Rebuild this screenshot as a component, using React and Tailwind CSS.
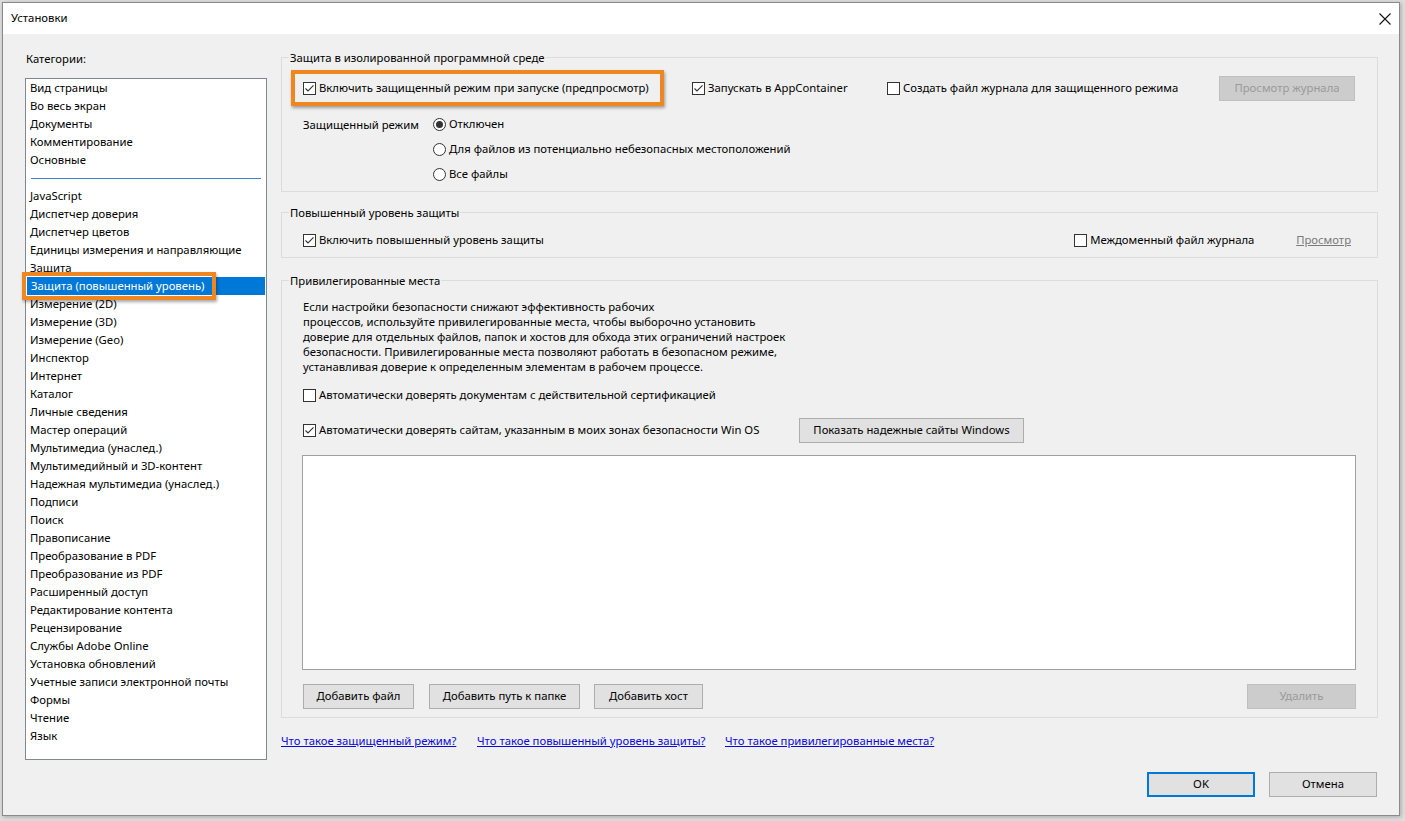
import React from "react";

const categories = [
  "Вид страницы",
  "Во весь экран",
  "Документы",
  "Комментирование",
  "Основные",
  "---",
  "JavaScript",
  "Диспетчер доверия",
  "Диспетчер цветов",
  "Единицы измерения и направляющие",
  "Защита",
  "Защита (повышенный уровень)",
  "Измерение (2D)",
  "Измерение (3D)",
  "Измерение (Geo)",
  "Инспектор",
  "Интернет",
  "Каталог",
  "Личные сведения",
  "Мастер операций",
  "Мультимедиа (унаслед.)",
  "Мультимедийный и 3D-контент",
  "Надежная мультимедиа (унаслед.)",
  "Подписи",
  "Поиск",
  "Правописание",
  "Преобразование в PDF",
  "Преобразование из PDF",
  "Расширенный доступ",
  "Редактирование контента",
  "Рецензирование",
  "Службы Adobe Online",
  "Установка обновлений",
  "Учетные записи электронной почты",
  "Формы",
  "Чтение",
  "Язык",
];

const SELECTED = "Защита (повышенный уровень)";

function Check({ checked }) {
  return (
    <span className="w-[13px] h-[13px] border border-[#333333] bg-white shrink-0 flex items-center justify-center">
      {checked && (
        <svg width="11" height="11" viewBox="0 0 11 11">
          <path d="M1.5 5.5 L4 8 L9.5 2.3" fill="none" stroke="#333333" strokeWidth="1.1" />
        </svg>
      )}
    </span>
  );
}

function CheckRow({ checked, children, className = "" }) {
  return (
    <div className={"flex items-center gap-[3px] whitespace-nowrap " + className}>
      <Check checked={checked} />
      <span>{children}</span>
    </div>
  );
}

function Radio({ on, children }) {
  return (
    <div className="h-[25px] flex items-center gap-[3px] whitespace-nowrap">
      <span className="w-[13px] h-[13px] rounded-full border border-[#333333] bg-white flex items-center justify-center shrink-0">
        {on && <span className="w-[7px] h-[7px] rounded-full bg-[#333333]" />}
      </span>
      <span>{children}</span>
    </div>
  );
}

function Btn({ children, className = "", disabled }) {
  return (
    <div
      className={
        "h-[25px] flex items-center justify-center border whitespace-nowrap " +
        (disabled
          ? "bg-[#cccccc] border-[#bfbfbf] text-[#9a9a9a] "
          : "bg-[#e1e1e1] border-[#adadad] text-black ") +
        className
      }
    >
      {children}
    </div>
  );
}

function Group({ title, className = "", children }) {
  return (
    <div className={"border border-[#dcdcdc] " + className}>
      <div className="-mt-[8px] ml-[7px] px-[1px] h-[16px] leading-[16px] bg-[#f0f0f0] w-fit">{title}</div>
      {children}
    </div>
  );
}

export default function App() {
  return (
    <div className="w-[1405px] h-[821px] bg-[#dedede] overflow-hidden text-[11.3px] text-black font-['Noto_Sans',sans-serif] pt-[2px] pl-[2px]">
      <div className="w-[1398px] h-[814px] border border-[#8a8a8a] bg-[#f0f0f0] shadow-[1px_1px_4px_rgba(0,0,0,0.25)] flex flex-col">
        {/* title bar */}
        <div className="h-[31px] bg-white flex items-center justify-between pl-[8px] pr-[7px] shrink-0">
          <span>Установки</span>
          <svg width="14" height="14" viewBox="0 0 14 14">
            <path d="M1.5 1.5 L12.5 12.5 M12.5 1.5 L1.5 12.5" stroke="#111" strokeWidth="1.1" />
          </svg>
        </div>

        {/* body */}
        <div className="flex pl-[22px]">
          {/* left column */}
          <div className="w-[242px] pt-[17px] shrink-0">
            <div className="h-[16px] leading-[16px] pl-[1px]">Категории:</div>
            <div className="relative mt-[11px] h-[682px] border border-[#828790] bg-white">
              {categories.map((c, i) =>
                c === "---" ? (
                  <div key={i} className="h-[18px] flex items-center px-[5px]">
                    <div className="h-px w-full bg-[#3c82c8]" />
                  </div>
                ) : (
                  <div
                    key={i}
                    className={
                      "h-[18px] leading-[18px] pl-[4px] whitespace-nowrap " +
                      (c === SELECTED ? "bg-[#0078d7] text-white mx-px pl-[3px]" : "")
                    }
                  >
                    {c}
                  </div>
                )
              )}
              <div className="absolute left-[-4px] top-[193px] w-[194px] h-[28px] border-[4px] border-[#f0861f] shadow-[1px_2px_3px_rgba(0,0,0,0.35)]" />
            </div>
          </div>

          {/* right column */}
          <div className="w-[1097px] ml-[14px] pt-[23px]">
            <Group title="Защита в изолированной программной среде" className="pb-[4px]">
              <div className="flex items-center mt-[4px]">
                <div className="ml-[9px] h-[36px] border-[4px] border-[#f0861f] shadow-[1px_2px_3px_rgba(0,0,0,0.35)] flex items-center pl-[8px] pr-[6px] w-[373px]">
                  <CheckRow checked>Включить защищенный режим при запуске (предпросмотр)</CheckRow>
                </div>
                <CheckRow checked className="ml-[28px] w-[195px]">Запускать в AppContainer</CheckRow>
                <CheckRow className="w-[332px]">Создать файл журнала для защищенного режима</CheckRow>
                <Btn disabled className="w-[136px]">Просмотр журнала</Btn>
              </div>
              <div className="flex mt-[6px] pl-[21px]">
                <div className="w-[130px] h-[25px] leading-[25px]">Защищенный режим</div>
                <div className="flex flex-col">
                  <Radio on>Отключен</Radio>
                  <Radio>Для файлов из потенциально небезопасных местоположений</Radio>
                  <Radio>Все файлы</Radio>
                </div>
              </div>
            </Group>

            <Group title="Повышенный уровень защиты" className="mt-[20px] pb-[6px]">
              <div className="flex items-center h-[22px] mt-[8px] pl-[21px] pr-[26px]">
                <CheckRow checked>Включить повышенный уровень защиты</CheckRow>
                <CheckRow className="ml-auto w-[222px]">Междоменный файл журнала</CheckRow>
                <span className="text-[#7a7a7a] underline">Просмотр</span>
              </div>
            </Group>

            <Group title="Привилегированные места" className="mt-[22px] pb-[8px]">
              <div className="pl-[21px] mt-[10px] leading-[15px]">
                Если настройки безопасности снижают эффективность рабочих
                <br />
                процессов, используйте привилегированные места, чтобы выборочно установить
                <br />
                доверие для отдельных файлов, папок и хостов для обхода этих ограничений настроек
                <br />
                безопасности. Привилегированные места позволяют работать в безопасном режиме,
                <br />
                устанавливая доверие к определенным элементам в рабочем процессе.
              </div>
              <CheckRow className="h-[22px] mt-[10px] pl-[21px]">
                Автоматически доверять документам с действительной сертификацией
              </CheckRow>
              <div className="flex items-center h-[26px] mt-[11px] pl-[21px]">
                <CheckRow checked className="w-[496px]">
                  Автоматически доверять сайтам, указанным в моих зонах безопасности Win OS
                </CheckRow>
                <Btn className="w-[225px]">Показать надежные сайты Windows</Btn>
              </div>
              <div className="mt-[12px] ml-[20px] mr-[21px] h-[215px] bg-white border border-[#a0a0a0]" />
              <div className="flex items-center mt-[14px] pl-[21px] pr-[21px]">
                <Btn className="w-[111px]">Добавить файл</Btn>
                <Btn className="w-[151px] ml-[15px]">Добавить путь к папке</Btn>
                <Btn className="w-[109px] ml-[14px]">Добавить хост</Btn>
                <Btn disabled className="w-[109px] ml-auto">Удалить</Btn>
              </div>
            </Group>

            <div className="flex h-[16px] leading-[16px] mt-[15px] text-[#0a0ad8] underline whitespace-nowrap">
              <span className="w-[196px]">Что такое защищенный режим?</span>
              <span className="w-[248px]">Что такое повышенный уровень защиты?</span>
              <span>Что такое привилегированные места?</span>
            </div>

            <div className="flex justify-end mt-[23px] pr-[1px] gap-[14px]">
              <div className="w-[108px] h-[25px] flex items-center justify-center bg-[#e1e1e1] border-2 border-[#0078d7]">OK</div>
              <Btn className="w-[108px]">Отмена</Btn>
            </div>
          </div>
        </div>
      </div>
    </div>
  );
}
